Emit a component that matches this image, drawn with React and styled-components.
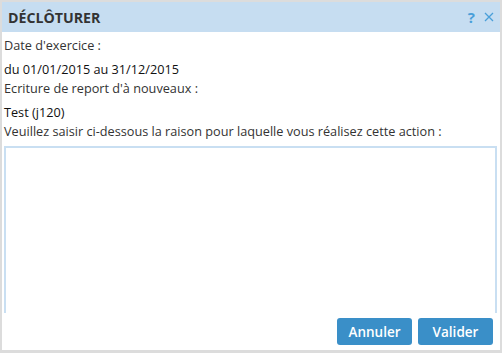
import React from "react";
import styled, { createGlobalStyle } from "styled-components";

const GlobalStyle = createGlobalStyle`
  html, body {
    margin: 0;
    padding: 0;
    background: #ffffff;
  }
  body {
    font-family: "Open Sans", "DejaVu Sans", sans-serif;
  }
`;

const Dialog = styled.div`
  box-sizing: border-box;
  width: 502px;
  height: 353px;
  border: 2px solid #dcdcdc;
  border-bottom-width: 3px;
  background: #ffffff;
  display: flex;
  flex-direction: column;
  overflow: hidden;
`;

const TitleBar = styled.div`
  display: flex;
  align-items: center;
  justify-content: space-between;
  height: 30px;
  padding: 0 6px 0 6px;
  background: #c6ddf1;
  flex-shrink: 0;
`;

const Title = styled.h1`
  margin: 0;
  font-size: 14.2px;
  font-weight: 700;
  color: #333333;
`;

const TitleTools = styled.div`
  display: flex;
  align-items: center;
  gap: 9px;
  color: #4a9fd9;
`;

const HelpMark = styled.span`
  font-size: 15px;
  font-weight: 700;
`;

const Body = styled.div`
  flex: 1;
  min-height: 0;
  overflow: hidden;
  padding: 4px 2px 0 2px;
  font-size: 12.7px;
  color: #222222;
`;

const Label = styled.div`
  line-height: 19px;
  color: #333333;
`;

const Value = styled.div`
  line-height: 19px;
  padding-top: 5px;
  color: #111111;
`;

const Reason = styled.textarea`
  display: block;
  box-sizing: border-box;
  width: 493px;
  height: 190px;
  margin-top: 5px;
  border: 2px solid #c9dff2;
  resize: none;
  outline: none;
  font: inherit;
`;

const Footer = styled.div`
  display: flex;
  justify-content: flex-end;
  gap: 6px;
  padding: 5px 7px 5px 0;
  flex-shrink: 0;
`;

const Button = styled.button`
  height: 27px;
  width: 75px;
  padding: 0;
  border: none;
  border-radius: 3px;
  background: #3a8fc8;
  color: #ffffff;
  font-family: inherit;
  font-size: 13.5px;
  font-weight: 600;
  cursor: pointer;
`;

function CloseIcon() {
  return (
    <svg width="10" height="10" viewBox="0 0 10 10">
      <path d="M1 1 L9 9 M9 1 L1 9" stroke="#4a9fd9" strokeWidth="1.3" fill="none" />
    </svg>
  );
}

export default function App() {
  return (
    <>
      <GlobalStyle />
      <Dialog>
        <TitleBar>
          <Title>DÉCLÔTURER</Title>
          <TitleTools>
            <HelpMark>?</HelpMark>
            <CloseIcon />
          </TitleTools>
        </TitleBar>
        <Body>
          <Label>Date d'exercice :</Label>
          <Value>du 01/01/2015 au 31/12/2015</Value>
          <Label>Ecriture de report d'à nouveaux :</Label>
          <Value>Test (j120)</Value>
          <Label>Veuillez saisir ci-dessous la raison pour laquelle vous réalisez cette action :</Label>
          <Reason />
        </Body>
        <Footer>
          <Button>Annuler</Button>
          <Button>Valider</Button>
        </Footer>
      </Dialog>
    </>
  );
}
